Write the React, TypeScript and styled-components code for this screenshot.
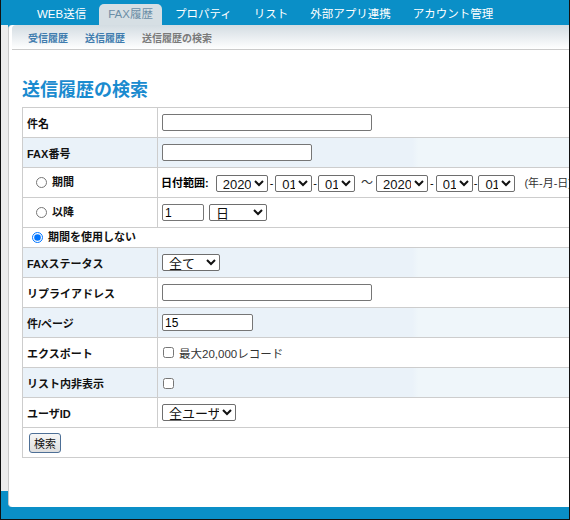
import React from 'react';
import styled, { createGlobalStyle } from 'styled-components';

const Global = createGlobalStyle`
  html, body { margin: 0; padding: 0; overflow: hidden; }
  body { font-family: "Liberation Sans", "Noto Sans CJK JP", sans-serif; }
`;

const Frame = styled.div`
  width: 570px;
  height: 520px;
  box-sizing: border-box;
  border: 1px solid #111;
  border-top: none;
  background: #0a8fc7;
  overflow: hidden;
`;

const TopNav = styled.div`
  display: flex;
  align-items: flex-end;
  height: 25px;
  padding-left: 25px;
`;

const Tab = styled.div<{ $active?: boolean }>`
  height: 21px;
  line-height: 21px;
  padding: 0 ${p => (p.$active ? '9px' : '11px')};
  margin: 0 ${p => (p.$active ? '2px' : '0')};
  font-size: 11.5px;
  color: ${p => (p.$active ? '#6c8ea6' : '#fff')};
  background: ${p => (p.$active ? '#d6dfe4' : 'transparent')};
  border-radius: 5px 5px 0 0;
  white-space: nowrap;
`;

const Body = styled.div`
  display: flex;
  align-items: flex-start;
`;

const Gutter = styled.div`
  width: 7px;
  height: 466px;
  background: #ededed;
  flex: none;
`;

const Panel = styled.div`
  flex: none;
  width: 640px;
  height: 482px;
  background: #fff;
  border-left: 1px solid #c9c9c9;
  border-radius: 4px 0 0 4px;
`;

const SubNav = styled.div`
  display: flex;
  gap: 17px;
  height: 24px;
  align-items: center;
  padding-left: 16px;
  margin-left: 3px;
  border-bottom: 1px solid #cbcbcb;
  background: linear-gradient(#d3dce2, #fff);
  border-radius: 4px 0 0 0;
`;

const SubLink = styled.span<{ $current?: boolean }>`
  font-size: 10px;
  font-weight: bold;
  color: ${p => (p.$current ? '#7a7a7a' : '#3f7cae')};
`;

const Content = styled.div`
  padding: 29px 0 0 13px;
`;

const Heading = styled.h1`
  margin: 0 0 6px;
  font-size: 18px;
  line-height: 22px;
  font-weight: bold;
  color: #1a8bcf;
`;

const Table = styled.table`
  width: 600px;
  border-collapse: collapse;
  border: 1px solid #cdcdcd;
`;

const Row = styled.tr<{ $alt?: boolean }>`
  height: 30px;
  background: ${p => (p.$alt ? 'linear-gradient(90deg, #eaf2f9 0%, #eaf2f9 65%, #eff6fa 66%, #eff6fa 100%)' : '#fff')};
  border-top: 1px solid #cdcdcd;
`;

const Label = styled.td`
  width: 130px;
  padding: 0 0 0 4px;
  border-right: 1px solid #cdcdcd;
  font-size: 11px;
  font-weight: bold;
  color: #111;
  white-space: nowrap;
`;

const Value = styled.td`
  padding: 0 0 0 4px;
  font-size: 11px;
  white-space: nowrap;
`;

const RadioRow = styled.tr`
  height: 20px;
  border-top: 1px solid #cdcdcd;
`;

const RadioCell = styled.td`
  padding: 0;
  line-height: 14px;
`;

const RadioLabel = styled.label<{ $indent?: boolean }>`
  display: inline-flex;
  align-items: center;
  gap: 5px;
  padding-left: ${p => (p.$indent ? '9px' : '4px')};
  font-size: 11px;
  line-height: 14px;
  font-weight: bold;
  color: #111;
`;

const Radio = styled.input`
  margin: 0;
  width: 11px;
  height: 11px;
`;

const TextBox = styled.input<{ $w: number }>`
  width: ${p => p.$w}px;
  height: 17px;
  box-sizing: border-box;
  border: 1px solid #767676;
  border-radius: 2px;
  padding: 0 2px;
  font-family: "Liberation Sans", "Noto Sans CJK JP", sans-serif;
  font-size: 12px;
  vertical-align: middle;
`;

const Select = styled.select<{ $w: number }>`
  width: ${p => p.$w}px;
  height: 17px;
  box-sizing: border-box;
  border: 1px solid #6e6e6e;
  border-radius: 2px;
  padding: 0 0 0 2px;
  font-family: "Liberation Sans", "Noto Sans CJK JP", sans-serif;
  font-size: 13px;
  line-height: 15px;
  color: #111;
  background: #fff;
  vertical-align: middle;
`;

const Dash = styled.span<{ $wide?: boolean }>`
  margin: 0 ${p => (p.$wide ? '2px' : '1px')};
  font-size: 11px;
`;

const Tilde = styled.span`
  margin: 0 3px 0 6px;
  font-size: 12px;
  color: #333;
`;

const RangeTitle = styled.span`
  font-weight: bold;
  font-size: 11px;
  margin: 0 7px 0 -1px;
`;

const Hint = styled.span`
  margin-left: 9px;
  font-size: 11px;
  color: #333;
`;

const Check = styled.input`
  margin: 0 5px 0 1px;
  width: 11px;
  height: 11px;
  vertical-align: middle;
`;

const CheckText = styled.span`
  font-size: 11.5px;
  color: #333;
  vertical-align: middle;
`;

const Button = styled.button`
  margin-left: 5px;
  height: 20px;
  padding: 0 4px;
  font-family: "Liberation Sans", "Noto Sans CJK JP", sans-serif;
  font-size: 11px;
  color: #111;
  border: 1px solid #4d6f96;
  border-radius: 3px;
  background: linear-gradient(#f6f6f6, #dedede);
`;

const Gap = styled.span`
  display: inline-block;
  width: 5px;
`;

const DateSelects: React.FC = () => (
  <>
    <Select $w={52} defaultValue="2020"><option>2020</option></Select>
    <Dash $wide>-</Dash>
    <Select $w={37} defaultValue="01"><option>01</option></Select>
    <Dash>-</Dash>
    <Select $w={37} defaultValue="01"><option>01</option></Select>
  </>
);

const tabs = ['WEB送信', 'FAX履歴', 'プロパティ', 'リスト', '外部アプリ連携', 'アカウント管理'];

export default function App() {
  return (
    <Frame>
      <Global />
      <TopNav>
        {tabs.map(t => (
          <Tab key={t} $active={t === 'FAX履歴'}>{t}</Tab>
        ))}
      </TopNav>
      <Body>
        <Gutter />
        <Panel>
          <SubNav>
            <SubLink>受信履歴</SubLink>
            <SubLink>送信履歴</SubLink>
            <SubLink $current>送信履歴の検索</SubLink>
          </SubNav>
          <Content>
            <Heading>送信履歴の検索</Heading>
            <Table>
              <tbody>
                <Row>
                  <Label>件名</Label>
                  <Value><TextBox $w={210} /></Value>
                </Row>
                <Row $alt>
                  <Label>FAX番号</Label>
                  <Value><TextBox $w={150} /></Value>
                </Row>
                <Row>
                  <Label>
                    <RadioLabel $indent><Radio type="radio" name="p" />期間</RadioLabel>
                  </Label>
                  <Value>
                    <RangeTitle>日付範囲:</RangeTitle>
                    <DateSelects />
                    <Tilde>～</Tilde>
                    <DateSelects />
                    <Hint>(年-月-日)</Hint>
                  </Value>
                </Row>
                <Row>
                  <Label>
                    <RadioLabel $indent><Radio type="radio" name="p" />以降</RadioLabel>
                  </Label>
                  <Value>
                    <TextBox $w={42} defaultValue="1" />
                    <Gap />
                    <Select $w={58} defaultValue="日"><option>日</option></Select>
                  </Value>
                </Row>
                <RadioRow>
                  <RadioCell colSpan={2}>
                    <RadioLabel $indent><Radio type="radio" name="p" defaultChecked />期間を使用しない</RadioLabel>
                  </RadioCell>
                </RadioRow>
                <Row $alt>
                  <Label>FAXステータス</Label>
                  <Value><Select $w={58} defaultValue="全て"><option>全て</option></Select></Value>
                </Row>
                <Row>
                  <Label>リプライアドレス</Label>
                  <Value><TextBox $w={210} /></Value>
                </Row>
                <Row $alt>
                  <Label>件/ページ</Label>
                  <Value><TextBox $w={91} defaultValue="15" /></Value>
                </Row>
                <Row>
                  <Label>エクスポート</Label>
                  <Value><Check type="checkbox" /><CheckText>最大20,000レコード</CheckText></Value>
                </Row>
                <Row $alt>
                  <Label>リスト内非表示</Label>
                  <Value><Check type="checkbox" /></Value>
                </Row>
                <Row>
                  <Label>ユーザID</Label>
                  <Value><Select $w={74} defaultValue="全ユーザ"><option>全ユーザ</option></Select></Value>
                </Row>
                <Row>
                  <td colSpan={2}><Button>検索</Button></td>
                </Row>
              </tbody>
            </Table>
          </Content>
        </Panel>
      </Body>
    </Frame>
  );
}
